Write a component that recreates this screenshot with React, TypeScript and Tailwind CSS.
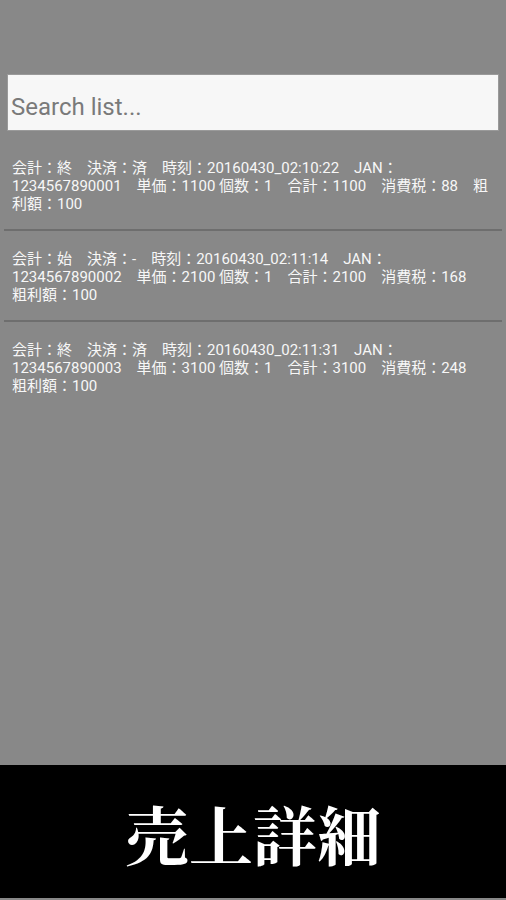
import React from 'react';

const rows = [
  '会計：終　決済：済　時刻：20160430_02:10:22　JAN：1234567890001　単価：1100 個数：1　合計：1100　消費税：88　粗利額：100',
  '会計：始　決済：-　時刻：20160430_02:11:14　JAN：1234567890002　単価：2100 個数：1　合計：2100　消費税：168　粗利額：100',
  '会計：終　決済：済　時刻：20160430_02:11:31　JAN：1234567890003　単価：3100 個数：1　合計：3100　消費税：248　粗利額：100',
];

export default function App() {
  return (
    <div className="w-[506px] h-[900px] bg-[#888888] flex flex-col overflow-hidden" style={{ fontFamily: 'Roboto, "Noto Sans CJK JP", sans-serif' }}>
      <div className="pt-[74px] px-[7px]">
        <div className="h-[57px] bg-[#f7f7f7] border border-[#9a9a9a] flex items-center pl-[3px] pt-[8px]">
          <input
            className="w-full bg-transparent outline-none text-[24px] text-[#444] placeholder:text-[#7a7a7a]"
            placeholder="Search list..."
          />
        </div>
      </div>

      <ul className="mt-[19px] px-[4px]">
        {rows.map((r, i) => (
          <li
            key={i}
            className={`pl-[8px] pr-[10px] pt-[9px] pb-[16px] text-[15px] leading-[18px] text-[#f7f7f7] ${i < rows.length - 1 ? 'border-b-2 border-[#6e6e6e] mb-[10px]' : ''}`}
          >
            {r}
          </li>
        ))}
      </ul>

      <div className="mt-auto h-[133px] mb-[2px] bg-black flex items-center justify-center">
        <span className="text-white text-[64px] font-bold" style={{ fontFamily: '"Noto Serif CJK JP", "Noto Sans CJK JP", serif' }}>
          売上詳細
        </span>
      </div>
    </div>
  );
}
